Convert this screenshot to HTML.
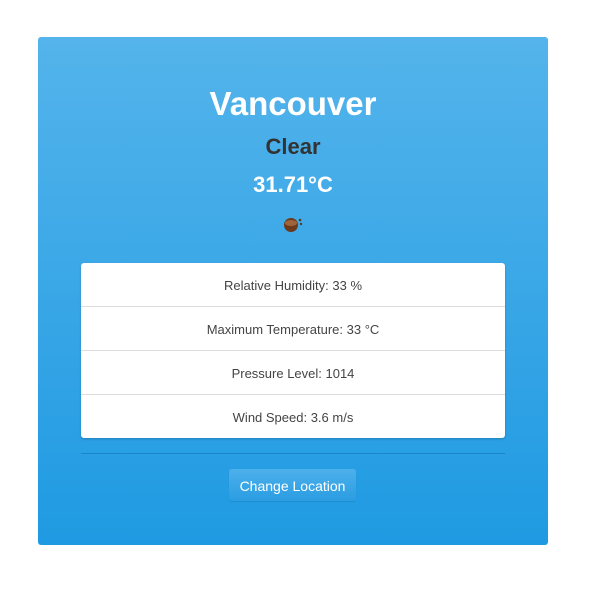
<!DOCTYPE html>
<html><head><style>
body{margin:0;background:#fff;font-family:"Liberation Sans",sans-serif;width:600px;height:600px;position:relative}
.card{position:absolute;left:38px;top:37px;width:510px;height:508px;border-radius:3px;background:linear-gradient(#54b4eb,#1f9ae2)}
.t{position:absolute;left:0;width:510px;text-align:center}
.list{position:absolute;left:43px;top:226px;width:424px;background:#fff;border-radius:3px;box-shadow:0 1px 2px rgba(0,0,0,.2)}
.list div{height:43px;line-height:45px;text-align:center;font-size:13px;color:#444;border-top:1px solid #ddd}
.list div:first-child{border-top:none}
.hr{position:absolute;left:43px;top:416px;width:424px;height:1px;background:#1b87c8}
.btn{position:absolute;left:191px;top:432px;width:127px;height:32px;border-radius:3px;background:linear-gradient(#4db0eb,#2a9de2);box-shadow:0 1px 1px rgba(0,0,0,.1);color:#fff;font-size:14px;line-height:34px;text-align:center}
</style></head><body>
<div class="card">
<div class="t" style="top:48px;font-size:33px;font-weight:bold;color:#fff">Vancouver</div>
<div class="t" style="top:97px;font-size:22px;font-weight:bold;color:#333">Clear</div>
<div class="t" style="top:135px;font-size:22px;font-weight:bold;color:#fff">31.71°C</div>
<svg style="position:absolute;left:245px;top:178px" width="22" height="18"><circle cx="8" cy="10" r="7" fill="#6b3a1c"/><ellipse cx="8" cy="8" rx="6" ry="3" fill="#a0643a"/><circle cx="17" cy="5" r="1.3" fill="#5a3a20"/><circle cx="18" cy="9" r="1.2" fill="#5a3a20"/></svg>
<div class="list"><div>Relative Humidity: 33 %</div><div>Maximum Temperature: 33 °C</div><div>Pressure Level: 1014</div><div>Wind Speed: 3.6 m/s</div></div>
<div class="hr"></div>
<div class="btn">Change Location</div>
</div>
</body></html>
